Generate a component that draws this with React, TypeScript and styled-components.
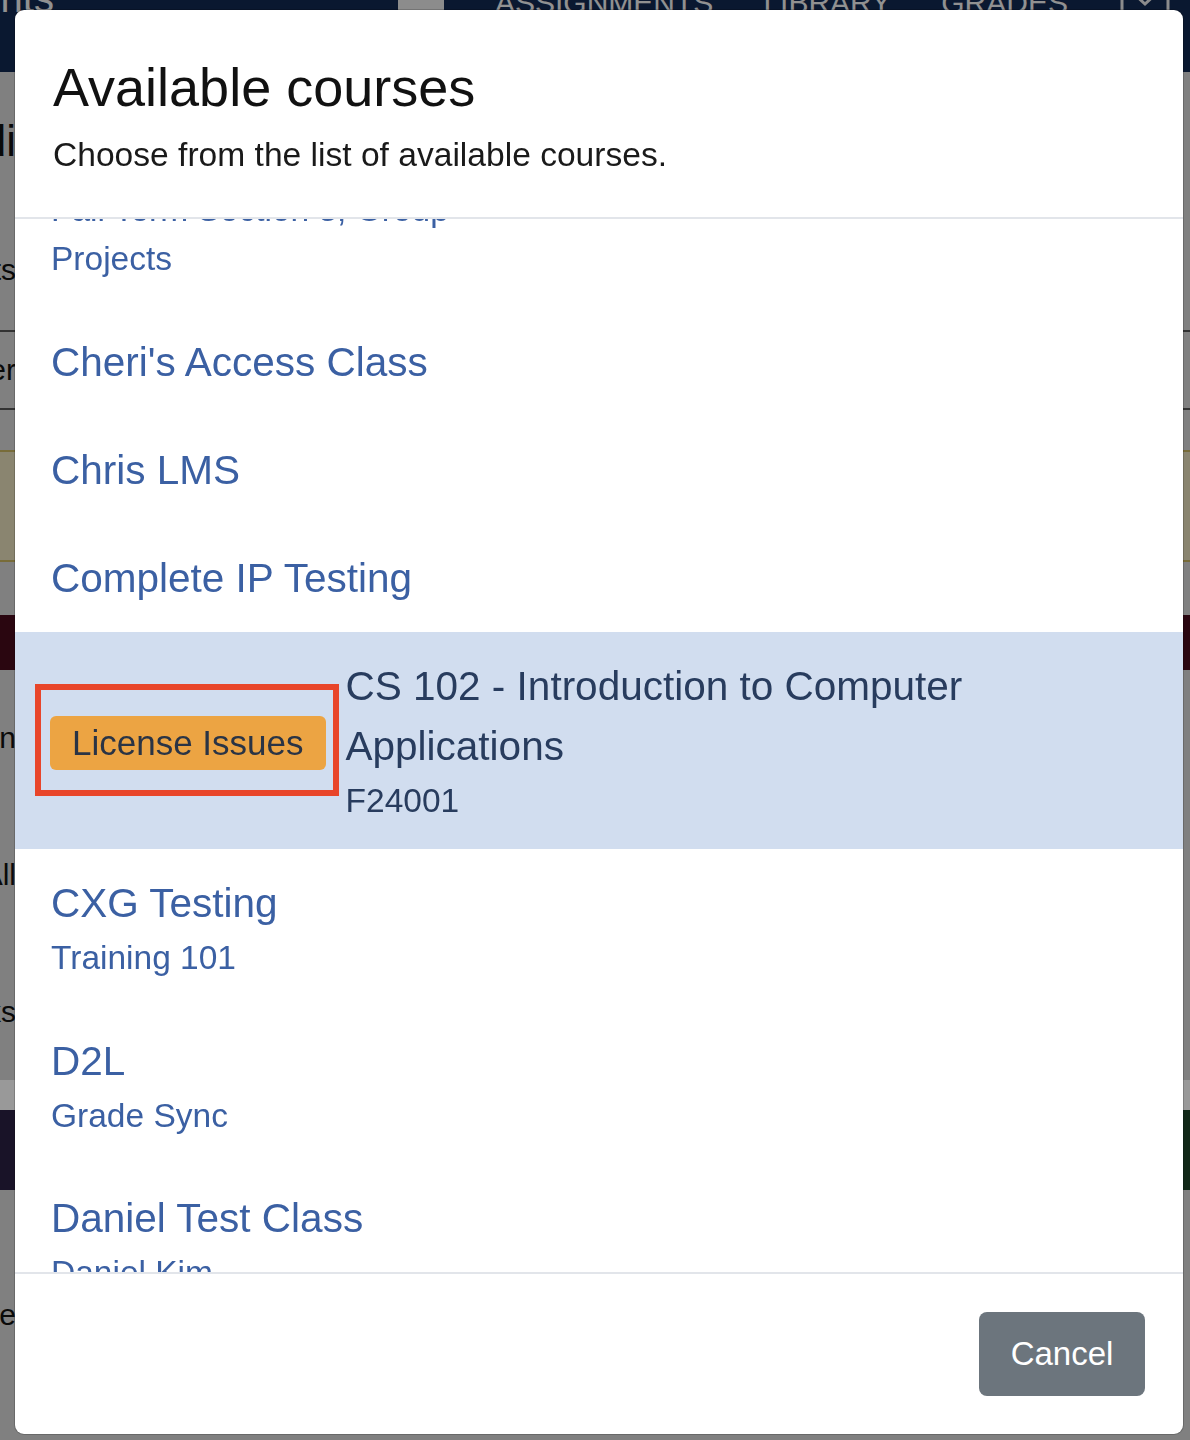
import React, { useLayoutEffect, useRef } from 'react'
import styled, { createGlobalStyle } from 'styled-components'

const GlobalStyle = createGlobalStyle`
  html, body {
    margin: 0;
    padding: 0;
  }
  body {
    font-family: "Liberation Sans", Arial, Helvetica, sans-serif;
    background: #d5d5d5;
    overflow: hidden;
  }
  * {
    box-sizing: border-box;
  }
`

/* ---------- page behind the dialog ---------- */

const Page = styled.div`
  height: 1440px;
  display: flex;
  flex-direction: column;
  overflow: hidden;
  background: #d5d5d5;
`

const NavBar = styled.nav`
  flex: 0 0 72px;
  display: flex;
  align-items: flex-start;
  background: #122850;
  color: #f2f2f2;
  overflow: hidden;
`

const Brand = styled.div`
  width: 398px;
  margin-top: -24px;
  font-size: 40px;
  white-space: nowrap;
  text-indent: -104px;
  overflow: hidden;
`

const MenuBlock = styled.div`
  width: 46px;
  height: 30px;
  margin-top: -18px;
  background: #eaeaea;
  border-radius: 3px;
`

const NavLinks = styled.ul`
  display: flex;
  gap: 50px;
  margin: -14px 0 0 51px;
  padding: 0;
  list-style: none;
  font-size: 30px;
  text-transform: uppercase;
  flex: 1;
`

const NavToggle = styled.div`
  margin: -12px 20px 0 0;
  color: #eaeaea;
`

const Band = styled.section<{ $height: number; $bg?: string; $line?: string }>`
  flex: 0 0 ${(p) => p.$height}px;
  display: flex;
  flex-direction: column;
  justify-content: space-around;
  background: ${(p) => p.$bg || 'transparent'};
  border-top: ${(p) => (p.$line ? `2px solid ${p.$line}` : 'none')};
  border-bottom: ${(p) => (p.$line ? `2px solid ${p.$line}` : 'none')};
`

const SplitBand = styled.section`
  flex: 0 0 80px;
  display: flex;
`

const SplitPart = styled.div<{ $bg: string }>`
  flex: 1;
  background: ${(p) => p.$bg};
`

const Peek = styled.div<{ $size: number }>`
  width: 16px;
  display: flex;
  justify-content: flex-end;
  overflow: hidden;
  white-space: nowrap;
  font-size: ${(p) => p.$size}px;
  color: #111;
`

/* ---------- dialog ---------- */

const Backdrop = styled.div`
  position: fixed;
  inset: 0;
  display: flex;
  padding: 10px 7px 6px 15px;
  background: rgba(0, 0, 0, 0.4);
`

const Modal = styled.div`
  flex: 1;
  display: flex;
  flex-direction: column;
  background: #fff;
  border-radius: 9px;
  overflow: hidden;
  box-shadow: 0 0 0 1px rgba(0, 0, 0, 0.18);
`

const ModalHeader = styled.header`
  padding: 45px 38px 37px;
  border-bottom: 2px solid #e2e5ea;
`

const Title = styled.h2`
  margin: 0;
  font-size: 54px;
  line-height: 65px;
  font-weight: 400;
  color: #111;
`

const Subtitle = styled.p`
  margin: 10px 0 0;
  font-size: 33.6px;
  line-height: 49.5px;
  color: #1a1a1a;
`

const CourseList = styled.div`
  flex: 1;
  overflow-y: auto;
  scrollbar-width: none;
  &::-webkit-scrollbar {
    display: none;
  }
`

const CourseRow = styled.div<{ $active?: boolean; $flagged?: boolean }>`
  display: flex;
  align-items: center;
  padding: 24px 36px 24px ${(p) => (p.$flagged ? 20 : 36)}px;
  background: ${(p) => (p.$active ? '#d1ddef' : 'transparent')};
  color: ${(p) => (p.$active ? '#283c5e' : '#3b60a3')};
  cursor: pointer;
`

const Callout = styled.div`
  flex-shrink: 0;
  margin-right: 7px;
  padding: 26px 7px 20px 9px;
  border: 6px solid #e8452a;
`

const Badge = styled.span`
  display: flex;
  align-items: center;
  height: 54px;
  padding: 0 22px;
  border-radius: 6px;
  background: #eca443;
  color: #2a3445;
  font-size: 35px;
  white-space: nowrap;
`

const CourseText = styled.div`
  min-width: 0;
`

const CourseName = styled.div`
  font-size: 40.5px;
  line-height: 60px;
`

const CourseSub = styled.div`
  font-size: 33.5px;
  line-height: 49.5px;
  white-space: pre-line;
`

const ModalFooter = styled.footer`
  display: flex;
  justify-content: flex-end;
  padding: 38px;
  border-top: 2px solid #e2e5ea;
`

const CancelButton = styled.button`
  width: 166px;
  height: 84px;
  border: none;
  border-radius: 8px;
  background: #6c757d;
  color: #fff;
  font-family: inherit;
  font-size: 33px;
  cursor: pointer;
`

type Course = {
  name: string
  sub?: string
  badge?: string
  active?: boolean
}

const courses: Course[] = [
  { name: 'Capstone Seminar', sub: 'Fall Term Section 3, Group\nProjects' },
  { name: "Cheri's Access Class" },
  { name: 'Chris LMS' },
  { name: 'Complete IP Testing' },
  {
    name: 'CS 102 - Introduction to Computer Applications',
    sub: 'F24001',
    badge: 'License Issues',
    active: true,
  },
  { name: 'CXG Testing', sub: 'Training 101' },
  { name: 'D2L', sub: 'Grade Sync' },
  { name: 'Daniel Test Class', sub: 'Daniel Kim' },
  { name: 'Demo Course', sub: 'Sandbox' },
  { name: 'English 101', sub: 'Composition' },
]

const App: React.FC = () => {
  const listRef = useRef<HTMLDivElement>(null)

  // the list is shown part way scrolled, as in the screenshot
  useLayoutEffect(() => {
    if (listRef.current) listRef.current.scrollTop = 118
  }, [])

  return (
    <>
      <GlobalStyle />
      <Page>
        <NavBar>
          <Brand>Students</Brand>
          <MenuBlock />
          <NavLinks>
            <li>Assignments</li>
            <li>Library</li>
            <li>Grades</li>
          </NavLinks>
          <NavToggle>
            <svg width="50" height="30" viewBox="0 0 50 30" fill="none" stroke="currentColor" strokeWidth="3">
              <rect x="2" y="-10" width="46" height="36" rx="4" />
              <polyline points="12,4 25,16 38,4" />
            </svg>
          </NavToggle>
        </NavBar>
        <Band $height={258}>
          <Peek $size={44}>Pedi</Peek>
          <Peek $size={30}>Students</Peek>
        </Band>
        <Band $height={80} $line="#555">
          <Peek $size={30}>Filter</Peek>
        </Band>
        <Band $height={40} />
        <Band $height={112} $bg="#e6debb" $line="#c9b560" />
        <Band $height={53} />
        <Band $height={55} $bg="#460a1b" />
        <Band $height={410}>
          <Peek $size={30}>Lesson</Peek>
          <Peek $size={30}>All</Peek>
          <Peek $size={30}>Tasks</Peek>
        </Band>
        <Band $height={30} $bg="#ffffff" />
        <SplitBand>
          <SplitPart $bg="#2b2143" />
          <SplitPart $bg="#1e432b" />
        </SplitBand>
        <Band $height={250}>
          <Peek $size={30}>Close</Peek>
        </Band>
      </Page>

      <Backdrop>
        <Modal role="dialog" aria-modal="true">
          <ModalHeader>
            <Title>Available courses</Title>
            <Subtitle>Choose from the list of available courses.</Subtitle>
          </ModalHeader>
          <CourseList ref={listRef}>
            {courses.map((c) => (
              <CourseRow key={c.name} $active={c.active} $flagged={!!c.badge}>
                {c.badge && (
                  <Callout>
                    <Badge>{c.badge}</Badge>
                  </Callout>
                )}
                <CourseText>
                  <CourseName>{c.name}</CourseName>
                  {c.sub && <CourseSub>{c.sub}</CourseSub>}
                </CourseText>
              </CourseRow>
            ))}
          </CourseList>
          <ModalFooter>
            <CancelButton>Cancel</CancelButton>
          </ModalFooter>
        </Modal>
      </Backdrop>
    </>
  )
}

export default App
